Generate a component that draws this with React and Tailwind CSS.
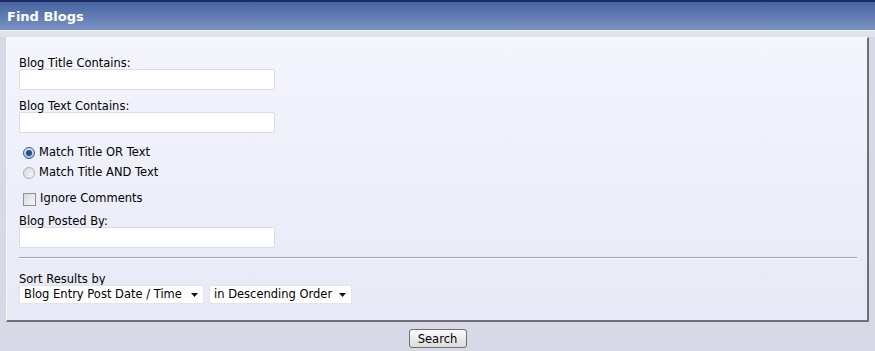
export default function App() {
  const label = "block h-[14px] leading-[16px] text-[11.5px] text-[#000]";
  const input = "block w-[256px] h-[21px] bg-white border border-[#dcdde3] rounded-[2px]";
  return (
    <div className="w-[875px] h-[351px] bg-[#d7dae6] font-['DejaVu_Sans',Verdana,sans-serif] overflow-hidden">
      <div className="h-[31px] border-t-2 border-[#1b2a63] bg-gradient-to-b from-[#4764a1] to-[#7a92c2] border-b border-b-[#f1f3f8] text-white font-bold text-[13px] pl-[7px] leading-[29px]">
        Find Blogs
      </div>
      <div className="h-[6px] bg-[#e0e3ec]" />
      <div className="ml-[6px] w-[863px] h-[285px] border-l border-t border-l-[#f7f8fc] border-t-[#fbfbfe] border-r-2 border-b-2 border-r-[#6f6f75] border-b-[#6f6f75] bg-gradient-to-b from-[#f4f5fd] to-[#e7e9f6] pl-[12px] pr-[9px] pt-[17px]">
        <span className={label}>Blog Title Contains:</span>
        <div className={input} />
        <span className={label + " mt-[8px]"}>Blog Text Contains:</span>
        <div className={input} />
        <div className="mt-[10px] pl-[4px]">
          <div className="flex items-center h-[20px] gap-[4px] text-[11.5px] text-[#000]">
            <span className="w-[12px] h-[12px] rounded-full border border-[#3b5a86] bg-gradient-to-b from-[#d6e3f0] to-[#a9c0da] flex items-center justify-center">
              <span className="w-[6px] h-[6px] rounded-full bg-[#1f4f8a]" />
            </span>
            Match Title OR Text
          </div>
          <div className="flex items-center h-[20px] gap-[4px] text-[11.5px] text-[#000]">
            <span className="w-[12px] h-[12px] rounded-full border border-[#a8acb4] bg-gradient-to-br from-[#d9dadd] to-[#f6f6f7]" />
            Match Title AND Text
          </div>
          <div className="flex items-center h-[20px] gap-[4px] mt-[6px] text-[11.5px] text-[#000]">
            <span className="w-[13px] h-[13px] border border-[#8e9198] bg-gradient-to-br from-[#d8d9dc] to-[#f7f7f8]" />
            Ignore Comments
          </div>
        </div>
        <span className={label + " mt-[4px]"}>Blog Posted By:</span>
        <div className={input} />
        <div className="mt-[9px] h-[2px] border-t border-t-[#a3a5ab] border-b border-b-[#fbfbfe] mr-[1px]" />
        <span className={label + " mt-[12px]"}>Sort Results by</span>
        <div className="flex gap-[5px]">
          <div className="h-[19px] w-[185px] bg-white border border-[#e3e4ea] flex items-center justify-between pl-[4px] pr-[4px] pt-[1px] text-[11.5px] text-[#000]">
            <span>Blog Entry Post Date / Time</span>
            <svg width="8" height="5" viewBox="0 0 8 5"><path d="M0 0h7l-3.5 4z" fill="#111" /></svg>
          </div>
          <div className="h-[19px] w-[143px] bg-white border border-[#e3e4ea] flex items-center justify-between pl-[4px] pr-[4px] pt-[1px] text-[11.5px] text-[#000]">
            <span>in Descending Order</span>
            <svg width="8" height="5" viewBox="0 0 8 5"><path d="M0 0h7l-3.5 4z" fill="#111" /></svg>
          </div>
        </div>
      </div>
      <div className="flex justify-center pt-[7px]">
        <button className="w-[58px] h-[19px] rounded-[3px] border border-[#707070] bg-gradient-to-b from-[#fbfbfb] to-[#dcdcdc] text-[11.5px] text-[#000] leading-[16px]">
          Search
        </button>
      </div>
    </div>
  );
}
